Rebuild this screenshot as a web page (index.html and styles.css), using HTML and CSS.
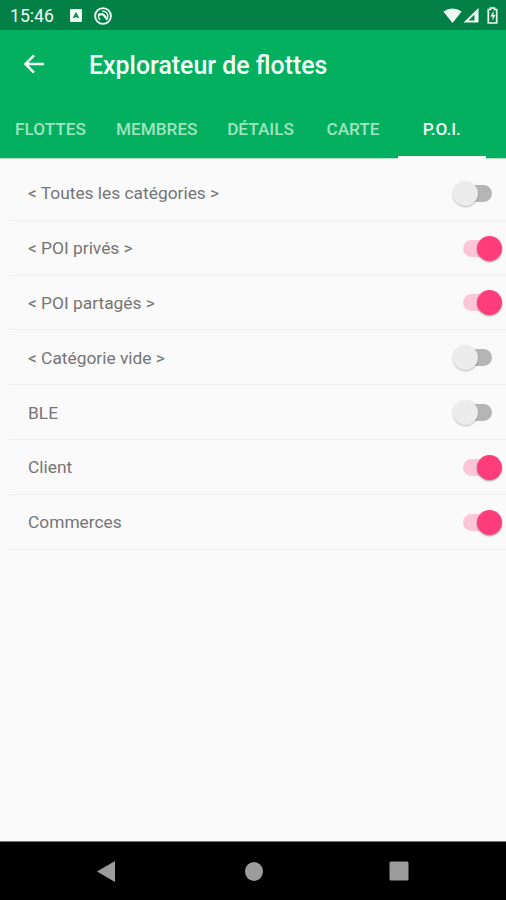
FILE: index.html
```html
<!DOCTYPE html>
<html lang="fr">
<head>
<meta charset="utf-8">
<title>Explorateur de flottes</title>
<link rel="stylesheet" href="styles.css">
</head>
<body>
<div class="screen">
  <div class="status">
    <span class="clock">15:46</span>
    <svg class="app-icon" width="12" height="13" viewBox="0 0 12 13"><rect width="12" height="13" rx="1" fill="#effbf3"/><path d="M3.500 9 6 4.500 8.500 9M4.500 7.500h3" fill="none" stroke="#0a8047" stroke-width="1.500"/></svg>
    <svg class="sync-icon" width="18" height="18" viewBox="0 0 18 18" fill="none" stroke="#effbf3"><circle cx="9" cy="9" r="7.900" stroke-width="1.900"/><path d="M6.200 12.800A4.800 4.800 0 0 1 5.500 6.300M8 4.300a4.800 4.800 0 0 1 5.500 6.500" stroke-width="1.500"/><path d="M5 8.300c2-1.800 4-1.500 5 0l3.500 4.500" stroke-width="2.200"/></svg>
    <svg class="signals" width="56" height="18" viewBox="0 0 56 18"><path d="M0.300 4.500Q9.500-1.500 18.700 4.500L9.500 16Z" fill="#effbf3"/><path d="M35.500 1v14.500H20.500Z" fill="#effbf3"/><path d="M31.500 7.500v6h-6Z" fill="#07804a"/><path d="M45.300 2.500h2.200V1h4v1.500h2.200v13.500h-8.400Z" fill="none" stroke="#effbf3" stroke-width="1.700"/><path d="m50.500 4-3 5.500h2v4l3-5.500h-2Z" fill="#effbf3"/></svg>
  </div>
  <header class="bar">
    <svg class="back" width="22" height="20" viewBox="0 0 22 20" fill="none" stroke="#f3fff7" stroke-width="2.500"><path d="M21 10H3M11 1.300 2.500 10l8.500 8.700"/></svg>
    <h1>Explorateur de flottes</h1>
  </header>
  <nav class="tabs">
    <span class="tab">FLOTTES</span>
    <span class="tab">MEMBRES</span>
    <span class="tab">DÉTAILS</span>
    <span class="tab">CARTE</span>
    <span class="tab active">P.O.I.</span>
  </nav>
  <main class="list">
    <div class="row"><span>&lt; Toutes les catégories &gt;</span><i class="switch"></i></div>
    <div class="row"><span>&lt; POI privés &gt;</span><i class="switch on"></i></div>
    <div class="row"><span>&lt; POI partagés &gt;</span><i class="switch on"></i></div>
    <div class="row"><span>&lt; Catégorie vide &gt;</span><i class="switch"></i></div>
    <div class="row"><span>BLE</span><i class="switch"></i></div>
    <div class="row"><span>Client</span><i class="switch on"></i></div>
    <div class="row"><span>Commerces</span><i class="switch on"></i></div>
  </main>
  <footer class="nav">
    <svg width="18" height="21" viewBox="0 0 18 21"><path d="M0 10.500 18 0v21Z" fill="#9c9c9c"/></svg>
    <svg class="home" width="18" height="19" viewBox="0 0 18 19"><ellipse cx="9" cy="9.500" rx="9" ry="9.500" fill="#9c9c9c"/></svg>
    <svg width="20" height="20" viewBox="0 0 20 20"><rect x=".5" y=".5" width="19" height="19" rx="1.500" fill="#9c9c9c"/></svg>
  </footer>
</div>
</body>
</html>
```

FILE: styles.css
```css
* { box-sizing: border-box; }
body { margin: 0; font-family: Roboto, sans-serif; }
.screen {
  width: 506px;
  height: 900px;
  display: flex;
  flex-direction: column;
  overflow: hidden;
  background: #fafafa;
}
.status {
  flex: none;
  height: 30px;
  display: flex;
  align-items: center;
  padding: 1px 7px 0 10px;
  background: #038046;
  color: #effbf3;
}
.clock { width: 60px; font-size: 17.6px; line-height: 20px; padding-top: 1px; }
.sync-icon { margin-left: 12px; }
.signals { margin-left: auto; }
.bar {
  flex: none;
  height: 71px;
  display: flex;
  align-items: center;
  padding-left: 23px;
  background: #02b060;
  color: #f3fff7;
}
.back { margin-top: -3px; }
h1 { margin: 0 0 0 44px; font-size: 24.9px; line-height: 30px; font-weight: 500; }
.tabs {
  flex: none;
  height: 58px;
  display: grid;
  grid-template-columns: 101px 111.500px 96px 89px 88.500px;
  background: #02b060;
  border-bottom: 1px solid #b4e3cb;
}
.tab {
  display: flex;
  justify-content: center;
  height: 58px;
  padding-top: 17px;
  font-size: 17.200px;
  line-height: 22px;
  font-weight: 500;
  color: #a1e3bf;
}
.active { color: #f3fff7; border-bottom: 3px solid #fff; }
.list { flex: 1; padding: 7px 0 0 9px; }
.row {
  height: 54.800px;
  display: flex;
  align-items: center;
  justify-content: space-between;
  padding: 1px 4.500px 0 19px;
  border-bottom: 1px solid #f0f0f0;
  font-size: 17.350px;
  color: #757575;
}
.switch {
  position: relative;
  display: flex;
  align-items: center;
  width: 39px;
  height: 25px;
  margin-right: 9.500px;
}
.switch::before {
  content: "";
  position: absolute;
  top: 4px;
  right: 0;
  width: 29px;
  height: 17px;
  border-radius: 9px;
  background: #b5b5b5;
}
.switch::after {
  content: "";
  position: relative;
  width: 25px;
  height: 25px;
  border-radius: 50%;
  background: #ececec;
  box-shadow: 0 1px 2px rgba(0, 0, 0, .25);
}
.switch.on { justify-content: flex-end; margin-right: 0; }
.switch.on::before { right: auto; left: 0; background: #fdc5d8; }
.switch.on::after { background: #ff3d7d; box-shadow: 0 1px 2px rgba(0, 0, 0, .4); }
.nav {
  flex: none;
  height: 59px;
  display: flex;
  align-items: center;
  justify-content: space-between;
  padding: 0 97px;
  background: #000;
  border-top: 1px solid #777;
}
.home { margin-left: 3px; }
```
